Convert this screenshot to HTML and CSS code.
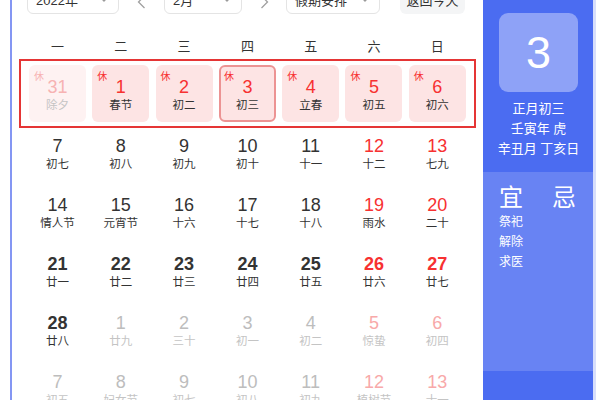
FILE: index.html
```html
<!DOCTYPE html>
<html lang="zh-CN">
<head>
<meta charset="utf-8">
<title>万年历</title>
<link rel="stylesheet" href="styles.css">
</head>
<body>
<div class="widget">
  <div class="main">
    <div class="toolbar">
      <div class="select sel-year"><span>2022年</span><svg class="chev" width="10" height="6" viewBox="0 0 10 6"><polyline points="1,1 5,5 9,1" fill="none" stroke="#9a9a9a" stroke-width="1.3"/></svg></div>
      <div class="arrow"><svg width="9" height="14" viewBox="0 0 9 14"><polyline points="7.5,1 1.5,7 7.5,13" fill="none" stroke="#a0a0a0" stroke-width="1.3"/></svg></div>
      <div class="select sel-month"><span>2月</span><svg class="chev" width="10" height="6" viewBox="0 0 10 6"><polyline points="1,1 5,5 9,1" fill="none" stroke="#9a9a9a" stroke-width="1.3"/></svg></div>
      <div class="arrow"><svg width="9" height="14" viewBox="0 0 9 14"><polyline points="1.5,1 7.5,7 1.5,13" fill="none" stroke="#a0a0a0" stroke-width="1.3"/></svg></div>
      <div class="select sel-holiday"><span>假期安排</span><svg class="chev" width="10" height="6" viewBox="0 0 10 6"><polyline points="1,1 5,5 9,1" fill="none" stroke="#9a9a9a" stroke-width="1.3"/></svg></div>
      <div class="today-btn">返回今天</div>
    </div>
    <div class="weekdays">
      <span>一</span><span>二</span><span>三</span><span>四</span><span>五</span><span>六</span><span>日</span>
    </div>
    <div class="grid">
      <div class="cell hol other"><i class="rest">休</i><b>31</b><em>除夕</em></div>
      <div class="cell hol"><i class="rest">休</i><b>1</b><em>春节</em></div>
      <div class="cell hol"><i class="rest">休</i><b>2</b><em>初二</em></div>
      <div class="cell hol sel"><i class="rest">休</i><b>3</b><em>初三</em></div>
      <div class="cell hol"><i class="rest">休</i><b>4</b><em>立春</em></div>
      <div class="cell hol"><i class="rest">休</i><b>5</b><em>初五</em></div>
      <div class="cell hol"><i class="rest">休</i><b>6</b><em>初六</em></div>

      <div class="cell"><b>7</b><em>初七</em></div>
      <div class="cell"><b>8</b><em>初八</em></div>
      <div class="cell"><b>9</b><em>初九</em></div>
      <div class="cell"><b>10</b><em>初十</em></div>
      <div class="cell"><b>11</b><em>十一</em></div>
      <div class="cell we"><b>12</b><em>十二</em></div>
      <div class="cell we"><b>13</b><em>七九</em></div>

      <div class="cell"><b>14</b><em>情人节</em></div>
      <div class="cell"><b>15</b><em>元宵节</em></div>
      <div class="cell"><b>16</b><em>十六</em></div>
      <div class="cell"><b>17</b><em>十七</em></div>
      <div class="cell"><b>18</b><em>十八</em></div>
      <div class="cell we"><b>19</b><em>雨水</em></div>
      <div class="cell we"><b>20</b><em>二十</em></div>

      <div class="cell bold"><b>21</b><em>廿一</em></div>
      <div class="cell bold"><b>22</b><em>廿二</em></div>
      <div class="cell bold"><b>23</b><em>廿三</em></div>
      <div class="cell bold"><b>24</b><em>廿四</em></div>
      <div class="cell bold"><b>25</b><em>廿五</em></div>
      <div class="cell bold we"><b>26</b><em>廿六</em></div>
      <div class="cell bold we"><b>27</b><em>廿七</em></div>

      <div class="cell bold"><b>28</b><em>廿八</em></div>
      <div class="cell other"><b>1</b><em>廿九</em></div>
      <div class="cell other"><b>2</b><em>三十</em></div>
      <div class="cell other"><b>3</b><em>初一</em></div>
      <div class="cell other"><b>4</b><em>初二</em></div>
      <div class="cell other we"><b>5</b><em>惊蛰</em></div>
      <div class="cell other we"><b>6</b><em>初四</em></div>

      <div class="cell other"><b>7</b><em>初五</em></div>
      <div class="cell other"><b>8</b><em>妇女节</em></div>
      <div class="cell other"><b>9</b><em>初七</em></div>
      <div class="cell other"><b>10</b><em>初八</em></div>
      <div class="cell other"><b>11</b><em>初九</em></div>
      <div class="cell other we"><b>12</b><em>植树节</em></div>
      <div class="cell other we"><b>13</b><em>十一</em></div>
    </div>
  </div>
  <div class="side">
    <div class="side-top">
      <div class="big-date">3</div>
      <div class="lunar-line">正月初三</div>
      <div class="lunar-line">壬寅年 虎</div>
      <div class="lunar-line">辛丑月 丁亥日</div>
    </div>
    <div class="side-mid">
      <div class="yiji">
        <div class="yj-col">
          <div class="yj-title">宜</div>
          <div class="yj-item">祭祀</div>
          <div class="yj-item">解除</div>
          <div class="yj-item">求医</div>
        </div>
        <div class="yj-col">
          <div class="yj-title">忌</div>
        </div>
      </div>
    </div>
    <div class="side-bot"></div>
  </div>
</div>
<div class="annot"></div>
</body>
</html>
```

FILE: styles.css
```css
html, body {
  margin: 0;
  padding: 0;
  background: #ffffff;
  overflow: hidden;
  height: 400px;
}
body {
  font-family: "Liberation Sans", "Noto Sans CJK SC", sans-serif;
  color: #333333;
  position: relative;
}
.widget {
  display: flex;
  margin-left: 10px;
  width: 586px;
  height: 420px;
  border-left: 2px solid #8496f3;
}
.main {
  width: 471px;
  padding-left: 15px;
  box-sizing: border-box;
}
.toolbar {
  display: flex;
  align-items: center;
  height: 30px;
  margin-top: -16px;
}
.select {
  height: 30px;
  box-sizing: border-box;
  border: 1px solid #e4e4e4;
  border-radius: 6px;
  display: flex;
  align-items: center;
  justify-content: space-between;
  padding: 0 9px 0 8px;
  font-size: 13px;
  color: #333;
  background: #fff;
}
.sel-year { width: 92px; }
.sel-month { width: 78px; }
.sel-holiday { width: 94px; }
.arrow {
  width: 45px;
  height: 30px;
  display: flex;
  align-items: center;
  justify-content: center;
  padding-top: 6px;
  box-sizing: border-box;
}
.arrow:nth-child(4) { width: 44px; }
.today-btn {
  margin-left: 20px;
  width: 65px;
  height: 30px;
  border-radius: 6px;
  background: #f4f5f6;
  font-size: 13px;
  display: flex;
  align-items: center;
  justify-content: center;
  color: #333;
}
.weekdays {
  display: grid;
  grid-template-columns: repeat(7, 57px);
  column-gap: 6.3px;
  margin-top: 23px;
  margin-left: 2px;
  height: 20px;
  line-height: 20px;
  font-size: 13px;
  text-align: center;
  color: #333;
}
.grid {
  display: grid;
  grid-template-columns: repeat(7, 57px);
  grid-auto-rows: 57px;
  column-gap: 6.3px;
  row-gap: 2px;
  margin-top: 8px;
  margin-left: 2px;
}
.cell {
  position: relative;
  border-radius: 6px;
  box-sizing: border-box;
  padding-top: 12px;
  text-align: center;
}
.cell b {
  display: block;
  font-weight: normal;
  font-size: 18px;
  line-height: 20px;
  height: 20px;
  color: #333;
}
.cell em {
  display: block;
  font-style: normal;
  font-size: 11.5px;
  line-height: 16px;
  color: #333;
}
.cell.bold b { font-weight: bold; }
.cell.we b { color: #f73131; }
.cell .rest {
  position: absolute;
  left: 5px;
  top: 6px;
  font-style: normal;
  font-size: 10px;
  line-height: 12px;
  color: #f73131;
}
.cell.hol { background: #fde4e4; }
.cell.hol b { color: #f73131; }
.cell.sel { border: 2px solid #ec9393; padding-top: 10px; }
.cell.sel .rest { left: 3px; top: 4px; }
.cell.other b { color: #bdbdbd; }
.cell.other em { color: #c4c4c4; }
.cell.other.we b { color: #f8a9a9; }
.cell.hol.other { background: #fef2f2; }
.cell.hol.other b, .cell.hol.other .rest { color: #f7b3b3; }
.side {
  width: 110px;
  display: flex;
  flex-direction: column;
  color: #ffffff;
  border-right: 3px solid #d7defb;
}
.side-top {
  height: 172px;
  background: #4b6cf1;
  padding-top: 13px;
  box-sizing: border-box;
  display: flex;
  flex-direction: column;
  align-items: center;
}
.big-date {
  width: 79px;
  height: 79px;
  border-radius: 9px;
  background: #8ea2f7;
  font-size: 45px;
  line-height: 79px;
  text-align: center;
  color: #fff;
  margin-left: 1px;
}
.lunar-line {
  font-size: 13px;
  line-height: 20px;
  text-align: center;
  margin-left: 1px;
}
.big-date + .lunar-line { margin-top: 7px; }
.side-mid {
  height: 199px;
  background: #6883f3;
  padding: 12px 0 0 16px;
  box-sizing: border-box;
}
.yiji {
  display: flex;
  gap: 29px;
}
.yj-title {
  font-size: 24px;
  line-height: 28px;
}
.yj-item {
  font-size: 12px;
  line-height: 20px;
}
.side-bot {
  flex: 1;
  background: #4b6cf1;
}
.annot {
  position: absolute;
  left: 19px;
  top: 59px;
  width: 457px;
  height: 69px;
  box-sizing: border-box;
  border: 2px solid #e53535;
}
```
